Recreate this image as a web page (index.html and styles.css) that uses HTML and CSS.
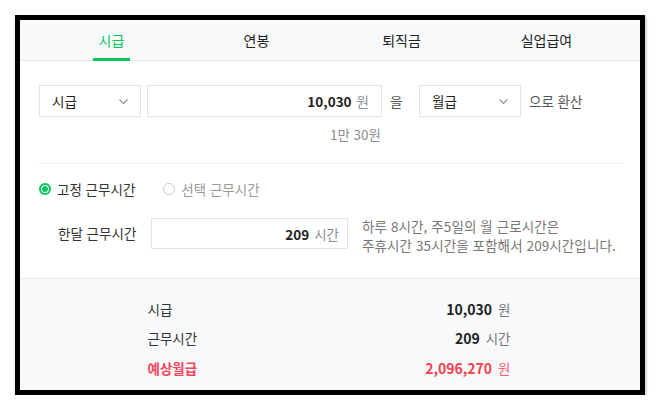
FILE: index.html
```html
<!DOCTYPE html>
<html lang="ko">
<head>
<meta charset="utf-8">
<link rel="stylesheet" href="styles.css">
</head>
<body>
<div class="card">
  <div class="tabs">
    <div class="tab active"><span>시급</span></div>
    <div class="tab"><span>연봉</span></div>
    <div class="tab"><span>퇴직금</span></div>
    <div class="tab"><span>실업급여</span></div>
  </div>
  <div class="main">
    <div class="convert">
      <div class="select sel-from"><span>시급</span><svg class="chev" width="9" height="5" viewBox="0 0 9 5"><path d="M0.5 0.5 L4.5 4.5 L8.5 0.5" fill="none" stroke="#8a8e96" stroke-width="1.1"/></svg></div>
      <div class="input money"><b>10,030</b><span class="unit">원</span></div>
      <span class="join">을</span>
      <div class="select sel-to"><span>월급</span><svg class="chev" width="9" height="5" viewBox="0 0 9 5"><path d="M0.5 0.5 L4.5 4.5 L8.5 0.5" fill="none" stroke="#8a8e96" stroke-width="1.1"/></svg></div>
      <span class="join2">으로 환산</span>
    </div>
    <div class="hint">1만 30원</div>
    <div class="divider"></div>
    <div class="radios">
      <label class="radio on"><i class="dot"></i>고정 근무시간</label>
      <label class="radio off"><i class="dot"></i>선택 근무시간</label>
    </div>
    <div class="hours">
      <span class="hours-label">한달 근무시간</span>
      <div class="input hrs"><b>209</b><span class="unit">시간</span></div>
      <p class="help">하루 8시간, 주5일의 월 근로시간은<br>주휴시간 35시간을 포함해서 209시간입니다.</p>
    </div>
  </div>
  <div class="summary">
    <div class="sum-grid">
      <span class="s-label">시급</span><span class="s-val"><b>10,030</b><span class="unit">원</span></span>
      <span class="s-label">근무시간</span><span class="s-val"><b>209</b><span class="unit">시간</span></span>
      <span class="s-label red">예상월급</span><span class="s-val red"><b>2,096,270</b><span class="unit">원</span></span>
    </div>
  </div>
</div>
</body>
</html>
```
FILE: styles.css
```css
* { box-sizing: border-box; }
html, body { margin: 0; padding: 0; background: #fff; }
body {
  font-family: "Noto Sans CJK KR", "Noto Sans", sans-serif;
  font-size: 13.5px;
  color: #333;
}
.card {
  margin: 15px 0 0 15px;
  width: 630px;
  height: 380px;
  border: 5px solid #000;
  background: #fff;
  box-shadow: 1px 2px 3px rgba(0,0,0,0.25);
  display: flex;
  flex-direction: column;
  overflow: hidden;
}
.tabs {
  display: grid;
  grid-template-columns: repeat(4, 1fr);
  padding: 0 21px 0 19px;
  height: 41px;
  background: #f8f9fb;
  border-bottom: 1px solid #e4e7ec;
  flex: none;
}
.tab {
  display: flex;
  justify-content: center;
  align-items: flex-end;
}
.tab span {
  height: 41px;
  margin-bottom: -1px;
  padding: 0 6px;
  display: flex;
  align-items: center;
  font-size: 14px;
  color: #222;
  border-bottom: 3px solid transparent;
  padding-top: 2px;
}
.tab.active span {
  color: #03c75a;
  border-bottom-color: #03c75a;
}
.main {
  padding: 24px 17px 23px 19px;
  flex: none;
}
.convert {
  display: flex;
  align-items: center;
  height: 32px;
}
.select {
  width: 102px;
  height: 32px;
  border: 1px solid #e0e3ea;
  display: flex;
  align-items: center;
  justify-content: space-between;
  padding: 0 12px 0 12px;
  color: #222;
  font-size: 13.5px;
}
.chev { margin-top: 1px; }
.input {
  height: 32px;
  border: 1px solid #e0e3ea;
  display: flex;
  align-items: center;
  justify-content: flex-end;
  padding-right: 12px;
  color: #222;
}
.input b { font-weight: 700; font-size: 13.5px; }
.input .unit { color: #8a8d93; margin-left: 5px; }
.money { width: 235px; margin-left: 6px; }
.join { margin-left: 8px; width: 29px; color: #555; }
.join2 { margin-left: 8px; color: #555; }
.hint {
  margin-left: 108px;
  width: 235px;
  text-align: right;
  margin-top: 8px;
  line-height: 18px;
  color: #8a8d93;
  padding-right: 1px;
}
.divider {
  margin-top: 20px;
  border-top: 1px solid #eceef1;
}
.radios {
  display: flex;
  align-items: center;
  margin-top: 15px;
  height: 20px;
  gap: 28px;
}
.radio {
  display: flex;
  align-items: center;
  gap: 6px;
  color: #333;
}
.radio.off { color: #999; }
.dot {
  width: 12px;
  height: 12px;
  border-radius: 50%;
  display: block;
}
.radio.on .dot {
  border: 2px solid #03c75a;
  background: radial-gradient(circle, #03c75a 0 2.6px, #fff 3.2px);
}
.radio.off .dot {
  border: 1px solid #c8cbd0;
  background: #fff;
}
.hours {
  display: flex;
  align-items: flex-start;
  margin-top: 19px;
}
.hours-label {
  margin-left: 19px;
  line-height: 31px;
  width: 93px;
  color: #333;
}
.hrs { width: 197px; height: 31px; padding-right: 8px; }
.help {
  margin: 0 0 0 14px;
  line-height: 19px;
  color: #777;
  margin-top: -1px;
  letter-spacing: 0.1px;
}
.summary {
  flex: 1;
  background: #f8f9fb;
  border-top: 1px solid #eceef1;
  padding-top: 15px;
}
.sum-grid {
  width: 363px;
  margin: 0 auto;
  display: grid;
  grid-template-columns: 1fr auto;
  grid-auto-rows: 29.5px;
  align-items: center;
  position: relative;
  left: -1px;
}
.s-label { color: #333; }
.s-val { text-align: right; color: #222; }
.s-val b { font-size: 14px; font-weight: 700; }
.s-val .unit { margin-left: 6px; color: #777; }
.s-label.red { color: #f5455c; font-weight: 700; }
.s-val.red b { color: #f5404b; }
.s-val.red .unit { color: #f5606d; }
```
